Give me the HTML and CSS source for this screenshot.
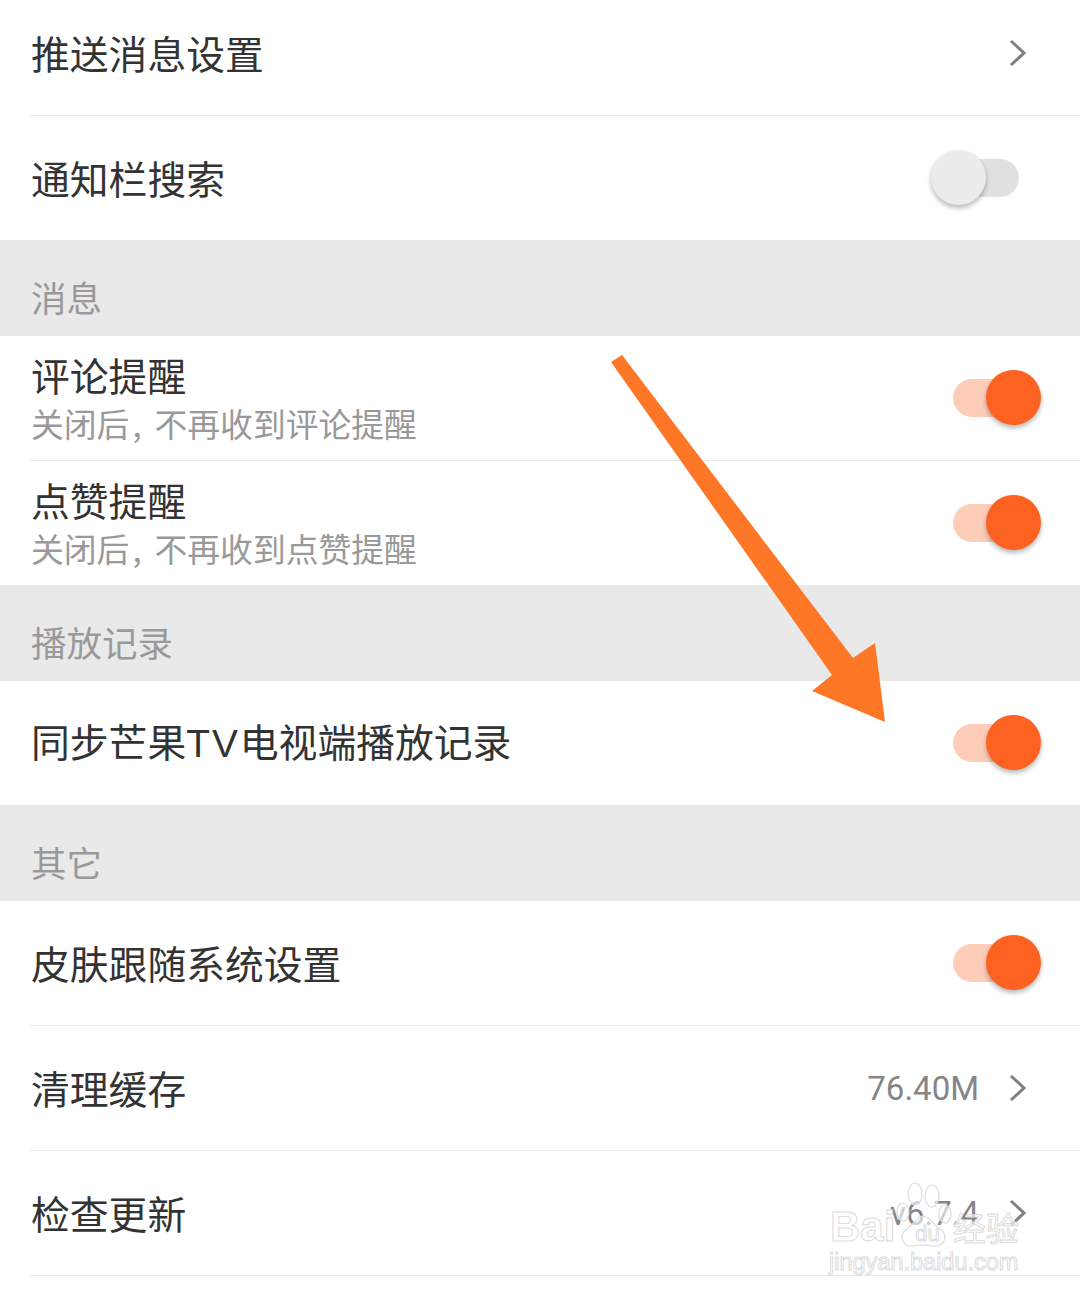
FILE: index.html
```html
<!DOCTYPE html>
<html lang="zh-CN">
<head>
  <meta charset="UTF-8" />
  <title>设置</title>
  <link rel="stylesheet" href="styles.css">
</head>
<body>

<div class="page">
  <div class="row line first">
    <span class="title">推送消息设置</span>
    <svg class="chev" viewBox="0 0 18 28"><path d="M2 2 L15 14 L2 26" /></svg>
  </div>
  <div class="row">
    <span class="title">通知栏搜索</span>
    <div class="switch off"><i></i></div>
  </div>

  <div class="section">消息</div>
  <div class="row line">
    <div class="stack">
      <span class="title">评论提醒</span>
      <span class="sub">关闭后<span class="comma">,</span>不再收到评论提醒</span>
    </div>
    <div class="switch"><i></i></div>
  </div>
  <div class="row">
    <div class="stack">
      <span class="title">点赞提醒</span>
      <span class="sub">关闭后<span class="comma">,</span>不再收到点赞提醒</span>
    </div>
    <div class="switch"><i></i></div>
  </div>

  <div class="section">播放记录</div>
  <div class="row">
    <span class="title">同步芒果<span class="latin">TV</span>电视端播放记录</span>
    <div class="switch"><i></i></div>
  </div>

  <div class="section">其它</div>
  <div class="row line">
    <span class="title">皮肤跟随系统设置</span>
    <div class="switch"><i></i></div>
  </div>
  <div class="row line">
    <span class="title">清理缓存</span>
    <div class="right">
      <span class="value">76.40M</span>
      <svg class="chev" viewBox="0 0 18 28"><path d="M2 2 L15 14 L2 26" /></svg>
    </div>
  </div>
  <div class="row line">
    <span class="title">检查更新</span>
    <div class="right">
      <span class="value">v6.7.4</span>
      <svg class="chev" viewBox="0 0 18 28"><path d="M2 2 L15 14 L2 26" /></svg>
    </div>
  </div>

  <!-- annotation arrow -->
  <svg class="arrow" viewBox="0 0 1080 1299">
    <polygon points="611,362 622,355 853,658 875,643 885,722 812,691 832,675" />
  </svg>

  <!-- watermark -->
  <div class="mark">
    <svg class="paw" viewBox="0 0 60 66">
      <ellipse cx="8" cy="30" rx="6" ry="9" />
      <ellipse cx="20" cy="12" rx="7" ry="11" />
      <ellipse cx="37" cy="14" rx="7" ry="11" />
      <ellipse cx="50" cy="32" rx="6" ry="9" />
      <path d="M28 34 C21 34 20 42 12 47 C3 53 7 65 18 64 C24 63 32 63 38 64 C50 65 54 53 45 47 C37 42 35 34 28 34 Z" />
    </svg>
    <div class="mark-top"><span class="mark-bai">Bai</span><span class="mark-du">du</span><span class="mark-cn">经验</span></div>
    <div class="mark-url">jingyan.baidu.com</div>
  </div>
</div>

</body>
</html>
```

FILE: styles.css
```css
* { box-sizing: border-box; }
body {
  margin: 0;
  background: #fff;
  font-family: "Noto Sans CJK SC", "Noto Sans", sans-serif;
  color: #333;
}
.page {
  position: relative;
  width: 1080px;
  height: 1299px;
  overflow: hidden;
}
.row {
  height: 124px;
  margin-left: 30px;
  padding-right: 39px;
  display: flex;
  align-items: center;
  justify-content: space-between;
}
.row.line {
  height: 125px;
  border-bottom: 1px solid #e8e8e8;
}
.row.first {
  height: 116px;
  padding-bottom: 9px;
}
.title {
  font-size: 38.8px;
  line-height: 50px;
  margin-left: 1px;
  padding-bottom: 2px;
}
.latin {
  font-family: "Liberation Sans", sans-serif;
  letter-spacing: 2px;
}
.stack {
  display: flex;
  flex-direction: column;
}
.stack .title {
  line-height: 46px;
  padding-bottom: 0;
}
.sub {
  font-size: 32.8px;
  line-height: 44px;
  margin: 4px 0 0 1px;
  color: #999;
}
.comma {
  margin: 0 13px 0 3px;
}
.section {
  height: 96px;
  padding: 34px 0 0 31px;
  background: #e9e9e9;
  color: #999;
  font-size: 35.5px;
  line-height: 46px;
}
.right {
  display: flex;
  align-items: center;
  gap: 30px;
  margin-right: 14px;
}
.value {
  font-family: "Roboto", sans-serif;
  font-size: 33px;
  color: #858585;
}
.chev {
  width: 18px;
  height: 28px;
}
.first > .chev { margin-right: 14px; }
.chev path {
  fill: none;
  stroke: #808080;
  stroke-width: 3;
}
.switch {
  position: relative;
  width: 66px;
  height: 38px;
  margin-right: 22px;
  border-radius: 19px;
  background: #fdcdb9;
}
.switch i {
  position: absolute;
  top: -9px;
  right: -22px;
  width: 55px;
  height: 55px;
  border-radius: 50%;
  background: #fd6221;
  box-shadow: 0 3px 5px rgba(0,0,0,0.28);
}
.switch.off { background: #e0e0e0; }
.switch.off i {
  right: auto;
  left: -22px;
  background: #ececec;
}
.arrow {
  position: absolute;
  top: 0;
  left: 0;
  width: 1080px;
  height: 1299px;
}
.arrow polygon { fill: #fd7726; }
.mark {
  position: absolute;
  left: 828px;
  top: 1182px;
  width: 200px;
  height: 100px;
  color: rgba(255,255,255,0.7);
  -webkit-text-stroke: 1px #dcdcdc;
  font-family: "Liberation Sans", sans-serif;
}
.paw {
  position: absolute;
  left: 67px;
  top: 0;
  width: 60px;
  height: 66px;
}
.paw ellipse, .paw path {
  fill: rgba(255,255,255,0.6);
  stroke: #dcdcdc;
  stroke-width: 1.2;
}
.mark-top {
  position: absolute;
  top: 22px;
  left: 2px;
  display: flex;
  align-items: baseline;
  white-space: nowrap;
  line-height: 46px;
}
.mark-bai {
  font-size: 42px;
  font-weight: bold;
}
.mark-du {
  font-size: 22px;
  margin: 0 13px 0 20px;
}
.mark-cn {
  font-family: "Noto Sans CJK SC", sans-serif;
  font-size: 33px;
}
.mark-url {
  position: absolute;
  top: 64px;
  left: 1px;
  font-size: 23.5px;
  line-height: 32px;
  white-space: nowrap;
}
```
